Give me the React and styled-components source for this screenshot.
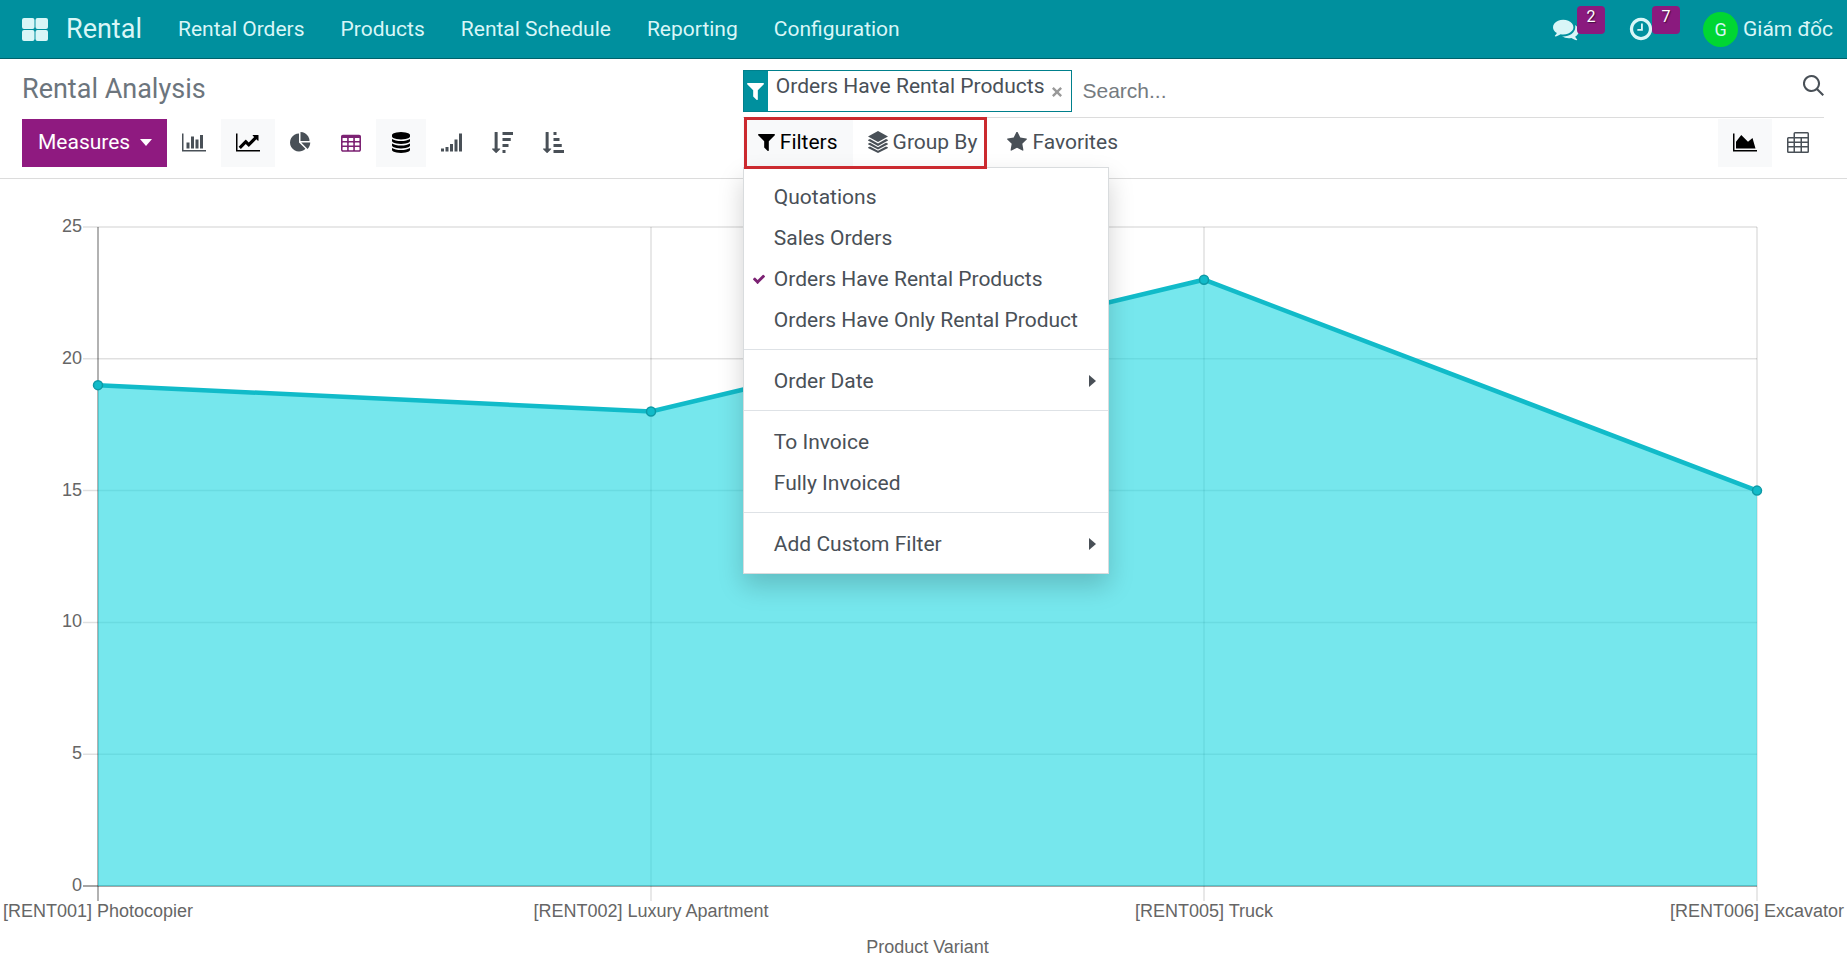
import { useLayoutEffect, useRef, useState } from "react";
import styled, { createGlobalStyle } from "styled-components";

const GlobalStyle = createGlobalStyle`
  *, *::before, *::after {
    box-sizing: border-box;
  }
  body {
    margin: 0;
    background-color: #fff;
    color: #495057;
    font-family: Roboto, "Liberation Sans", sans-serif;
    font-size: 21px;
  }
  button, input {
    font: inherit;
    color: inherit;
  }
`;

//*********************************************************
//  Icons

const icons = {
  apps: {
    box: "0 0 26 23",
    path: "M2 0h8.500q2 0 2 2v7q0 2-2 2h-8.500q-2 0-2-2v-7q0-2 2-2zM15.500 0h8.500q2 0 2 2v7q0 2-2 2h-8.500q-2 0-2-2v-7q0-2 2-2zM2 12h8.500q2 0 2 2v7q0 2-2 2h-8.500q-2 0-2-2v-7q0-2 2-2zM15.500 12h8.500q2 0 2 2v7q0 2-2 2h-8.500q-2 0-2-2v-7q0-2 2-2z",
  },
  comments: {
    path: "M1408 768q0 139-94 257t-256.500 186.500-353.500 68.500q-86 0-176-16-124 88-278 128-36 9-86 16h-3q-11 0-20.500-8t-11.500-21q-1-3-1-6.500t.5-6.500 2-6l2.500-5 3.500-5.500 4-5 4.500-5 4-4.500q5-6 23-25t26-29.500 22.500-29 25-38.500 20.500-44q-124-72-195-177t-71-224q0-139 94-257t256.500-186.500 353.500-68.500 353.500 68.500 256.500 186.500 94 257zm384 256q0 120-71 224.500t-195 176.500q10 24 20.500 44t25 38.500 22.500 29 26 29.500 23 25q1 1 4 4.500t4.500 5 4 5 3.500 5.500l2.500 5 2 6 .5 6.500-1 6.500q-3 14-13 22t-22 7q-50-7-86-16-154-40-278-128-90 16-176 16-271 0-472-132 58 4 88 4 161 0 309-45t264-129q125-92 192-212t67-254q0-77-23-152 129 71 204 178t75 230z",
  },
  clock: {
    path: "M1024 544v448q0 14-9 23t-23 9h-320q-14 0-23-9t-9-23v-64q0-14 9-23t23-9h224v-352q0-14 9-23t23-9h64q14 0 23 9t9 23zm416 352q0-148-73-273t-198-198-273-73-273 73-198 198-73 273 73 273 198 198 273 73 273-73 198-198 73-273zm224 0q0 209-103 385.500t-279.500 279.500-385.500 103-385.500-103-279.500-279.500-103-385.500 103-385.500 279.500-279.500 385.500-103 385.500 103 279.500 279.500 103 385.500z",
  },
  bar: {
    box: "0 0 2048 1792",
    path: "M640 896v512h-256v-512h256zm384-512v1024h-256v-1024h256zm1024 1152v128h-2048v-1536h128v1408h1920zm-640-896v768h-256v-768h256zm384-384v1152h-256v-1152h256z",
  },
  line: {
    box: "0 0 2048 1792",
    path: "M2048 1536v128h-2048v-1536h128v1408h1920zm-128-1248v435q0 21-19.500 29.500t-35.500-7.500l-121-121-633 633q-10 10-23 10t-23-10l-233-233-416 416-192-192 585-585q10-10 23-10t23 10l233 233 464-464-121-121q-16-16-7.500-35.500t29.500-19.500h435q14 0 23 9t9 23z",
  },
  area: {
    box: "0 0 2048 1792",
    path: "M2048 1536v128h-2048v-1536h128v1408h1920zm-384-1024l256 896h-1664v-576l448-576 576 576z",
  },
  pie: {
    path: "M768 890l546 546q-106 108-247.500 168t-298.500 60q-209 0-385.500-103t-279.500-279.500-103-385.500 103-385.500 279.500-279.500 385.500-103v762zm187 6h773q0 157-60 298.500t-168 247.500zm709-128h-768v-768q209 0 385.500 103t279.500 279.500 103 385.500z",
  },
  table: {
    box: "0 128 1664 1536",
    path: "M160 256h1344q66 0 113 47t47 113v1088q0 66-47 113t-113 47h-1344q-66 0-113-47t-47-113v-1088q0-66 47-113t113-47zM128 544v192q0 32 32 32h320q32 0 32-32v-192q0-32-32-32h-320q-32 0-32 32zM640 544v192q0 32 32 32h320q32 0 32-32v-192q0-32-32-32h-320q-32 0-32 32zM1152 544v192q0 32 32 32h320q32 0 32-32v-192q0-32-32-32h-320q-32 0-32 32zM128 928v192q0 32 32 32h320q32 0 32-32v-192q0-32-32-32h-320q-32 0-32 32zM640 928v192q0 32 32 32h320q32 0 32-32v-192q0-32-32-32h-320q-32 0-32 32zM1152 928v192q0 32 32 32h320q32 0 32-32v-192q0-32-32-32h-320q-32 0-32 32zM128 1312v192q0 32 32 32h320q32 0 32-32v-192q0-32-32-32h-320q-32 0-32 32zM640 1312v192q0 32 32 32h320q32 0 32-32v-192q0-32-32-32h-320q-32 0-32 32zM1152 1312v192q0 32 32 32h320q32 0 32-32v-192q0-32-32-32h-320q-32 0-32 32z",
  },
  database: {
    box: "0 0 1536 1792",
    path: "M768 768q237 0 443-43t325-127v170q0 69-103 128t-280 93.500-385 34.500-385-34.500-280-93.500-103-128v-170q119 84 325 127t443 43zm0 768q237 0 443-43t325-127v170q0 69-103 128t-280 93.500-385 34.500-385-34.500-280-93.500-103-128v-170q119 84 325 127t443 43zm0-384q237 0 443-43t325-127v170q0 69-103 128t-280 93.500-385 34.500-385-34.500-280-93.500-103-128v-170q119 84 325 127t443 43zm0-1152q208 0 385 34.500t280 93.500 103 128v128q0 69-103 128t-280 93.500-385 34.500-385-34.500-280-93.500-103-128v-128q0-69 103-128t280-93.500 385-34.500z",
  },
  signal: {
    path: "M0 1408h256v256h-256zM384 1280h256v384h-256zM768 1024h256v640h-256zM1152 640h256v1024h-256zM1536 128h256v1536h-256z",
  },
  sortDesc: {
    path: "M704 1440q0 12-10 24l-319 319q-10 9-23 9-12 0-23-9l-320-320q-15-16-7-35 8-20 30-20h192v-1376q0-14 9-23t23-9h192q14 0 23 9t9 23v1376h192q14 0 23 9t9 23zM896 0h896v256h-896zM896 512h704v256h-704zM896 1024h512v256h-512zM896 1536h256v256h-256z",
  },
  sortAsc: {
    path: "M704 1440q0 12-10 24l-319 319q-10 9-23 9-12 0-23-9l-320-320q-15-16-7-35 8-20 30-20h192v-1376q0-14 9-23t23-9h192q14 0 23 9t9 23v1376h192q14 0 23 9t9 23zM896 0h256v256h-256zM896 512h512v256h-512zM896 1024h704v256h-704zM896 1536h896v256h-896z",
  },
  filter: {
    box: "192 256 1408 1408",
    path: "M1595 295q17 41-14 70l-493 493v742q0 42-39 59-13 5-25 5-27 0-45-19l-256-256q-19-19-19-45v-486l-493-493q-31-29-14-70 17-39 59-39h1280q42 0 59 39z",
  },
  layers: {
    box: "0 0 20 22",
    path: "M10 0l10 5.500-10 5.500-10-5.500zM0 9l2-1 8 4.400 8-4.400 2 1v.6l-10 5.300-10-5.300zM0 12.800l2-1 8 4.400 8-4.400 2 1v.5l-10 5.300-10-5.300zM0 16.600l2-1 8 4.200 8-4.200 2 1v.3l-10 5.100-10-5.100z",
  },
  star: {
    box: "64 64 1664 1664",
    path: "M1728 647q0 22-26 48l-363 354 86 500q1 7 1 20 0 21-10.500 35.500t-30.500 14.500q-19 0-40-12l-449-236-449 236q-22 12-40 12-21 0-31.500-14.500t-10.500-35.500q0-6 2-20l86-500-364-354q-25-27-25-48 0-37 56-46l502-73 225-455q19-41 49-41t49 41l225 455 502 73q56 9 56 46z",
  },
  check: {
    box: "121 258 1550 1264",
    path: "M1671 566q0 40-28 68l-724 724-136 136q-28 28-68 28t-68-28l-136-136-362-362q-28-28-28-68t28-68l136-136q28-28 68-28t68 28l294 295 656-657q28-28 68-28t68 28l136 136q28 28 28 68z",
  },
  close: {
    box: "0 0 10 10",
    path: "M1.700 0l3.300 3.300 3.300-3.300 1.700 1.700-3.300 3.300 3.300 3.300-1.700 1.700-3.300-3.300-3.300 3.300-1.700-1.700 3.300-3.300-3.300-3.300z",
  },
  search: {
    box: "0 0 21 21",
    path: "M8.500 0a8.500 8.500 0 0 1 6.700 13.700l5.800 5.800-1.500 1.500-5.800-5.800a8.500 8.500 0 1 1-5.200-15.200zM8.500 2a6.500 6.500 0 1 0 0 13 6.500 6.500 0 0 0 0-13z",
  },
  pivot: {
    box: "0 0 22 21",
    path: "M8 0h12.500q1.500 0 1.500 1.500v18q0 1.500-1.500 1.500h-19q-1.500 0-1.500-1.500v-13q0-1.500 1.500-1.500h5v-3.500q0-1.500 1.500-1.500zM8 1.500v3.500h12.500v-3.500zM1.500 6.500v3h5v-3zM8 6.500v3h5.500v-3zM15 6.500v3h5.500v-3zM1.500 11v3h5v-3zM8 11v3h5.500v-3zM15 11v3h5.500v-3zM1.500 15.500v4h5v-4zM8 15.500v4h5.500v-4zM15 15.500v4h5.500v-4z",
  },
  caretDown: { box: "0 0 12 7", path: "M0 0h12l-6 7z" },
  caretRight: { box: "0 0 7 12", path: "M0 0l7 6-7 6z" },
};

const Svg = styled.svg`
  display: block;
  flex: none;
  fill: currentColor;
`;

const Icon = ({ name, width = 21, height = 21 }) => (
  <Svg
    width={width}
    height={height}
    viewBox={icons[name].box || "0 0 1792 1792"}
    aria-hidden="true"
  >
    <path fillRule="evenodd" d={icons[name].path} />
  </Svg>
);

//*********************************************************
//  Navbar

const Nav = styled.nav`
  display: flex;
  align-items: center;
  height: 59px;
  padding: 0 14px 0 22px;
  background-color: #00909e;
  border-bottom: 1px solid #00626b;
  color: #d9f6f7;
`;

const NavButton = styled.button`
  display: flex;
  padding: 0;
  border: none;
  background: none;
  cursor: pointer;
`;

const Brand = styled.a`
  margin: 0 36px 0 18px;
  color: inherit;
  font-size: 27px;
  text-decoration: none;
`;

const NavLinks = styled.div`
  display: flex;
  flex: 1;
  gap: 36px;
`;

const NavLink = styled.a`
  color: inherit;
  text-decoration: none;
  white-space: nowrap;
`;

const Systray = styled.div`
  display: flex;
  align-items: center;
`;

const TrayButton = styled(NavButton)`
  position: relative;
  margin-right: 49px;
`;

const Badge = styled.span`
  position: absolute;
  left: 24px;
  bottom: 8px;
  width: 28px;
  height: 28px;
  border-radius: 4px;
  background-color: #8a1a7e;
  color: #fff;
  font-size: 16px;
  line-height: 22px;
  text-align: center;
  text-shadow: 1px 1px 1px rgba(0, 0, 0, 0.5);
`;

const User = styled(NavButton)`
  align-items: center;
  gap: 5px;
`;

const Avatar = styled.span`
  width: 35px;
  height: 35px;
  border-radius: 50%;
  background-color: #00d633;
  font-size: 18px;
  line-height: 36px;
  text-align: center;
`;

//*********************************************************
//  Control panel

const ControlPanel = styled.header`
  display: grid;
  grid-template-columns: 2fr 3fr;
  grid-template-rows: 59px 60px;
  padding: 0 23px 0 22px;
  border-bottom: 1px solid #dcdcdc;
`;

const Title = styled.h1`
  margin: 0;
  color: #6c757d;
  font-size: 27px;
  font-weight: 400;
  line-height: 60px;
`;

const SearchBar = styled.div`
  display: flex;
  align-items: center;
  padding-top: 6px;
  border-bottom: 1px solid #dcdcdc;
`;

const Facet = styled.div`
  display: flex;
  height: 42px;
  border: 1px solid #00808c;
`;

const FacetIcon = styled.span`
  display: flex;
  align-items: center;
  justify-content: center;
  width: 24px;
  background-color: #00909e;
  color: #fff;
`;

const FacetLabel = styled.span`
  padding-left: 8px;
  line-height: 31px;
  white-space: nowrap;
`;

const FacetRemove = styled.button`
  display: flex;
  align-items: center;
  padding: 1px 9px 0 8px;
  border: none;
  background: none;
  color: #999;
  cursor: pointer;
`;

const SearchInput = styled.input`
  flex: 1;
  min-width: 0;
  padding: 0 10px;
  border: none;
  outline: none;
  font-family: "Liberation Sans", Arial, sans-serif;

  &::placeholder {
    color: #757b80;
    opacity: 1;
  }
`;

const SearchButton = styled.button`
  display: flex;
  padding: 0 0 12px;
  border: none;
  background: none;
  cursor: pointer;
`;

const Tools = styled.div`
  display: flex;
  align-items: flex-start;
  padding-top: 1px;
`;

const Measures = styled.button`
  display: flex;
  align-items: center;
  gap: 10px;
  height: 48px;
  padding: 0 15px 2px 16px;
  border: none;
  background-color: #8f1a80;
  color: #fff;
  cursor: pointer;
`;

const ToolButton = styled.button`
  display: flex;
  align-items: center;
  gap: 5px;
  height: 48px;
  padding: 0 15px 2px;
  border: none;
  background-color: ${(props) => (props.$active ? "#f8f9fa" : "transparent")};
  color: ${(props) => (props.$accent ? "#7c2273" : props.$active ? "#000" : "#495057")};
  white-space: nowrap;
  cursor: pointer;
`;

const Spacer = styled.div`
  flex: 1;
`;

const Highlight = styled.div`
  position: relative;
  display: flex;

  &::after {
    content: "";
    position: absolute;
    z-index: 3;
    inset: -2px 5px -2px 1px;
    border: 3px solid #cb2a2f;
    pointer-events: none;
  }
`;

//*********************************************************
//  Filter menu

const Menu = styled.div`
  position: absolute;
  z-index: 2;
  top: 48px;
  left: 0;
  width: 366px;
  padding: 8px 0 9px;
  border: 1px solid #d9dcde;
  background-color: #fff;
  box-shadow: 0 12px 24px rgba(0, 0, 0, 0.18);
`;

const MenuItem = styled.button`
  display: flex;
  align-items: center;
  width: 100%;
  height: 41px;
  padding: 0 12px 0 9px;
  border: none;
  background: none;
  text-align: left;
  white-space: nowrap;
  cursor: pointer;
`;

const CheckSlot = styled.span`
  width: 21px;
  color: #7c2273;
`;

const MenuLabel = styled.span`
  flex: 1;
`;

const Divider = styled.hr`
  height: 1px;
  margin: 9px 0 10px;
  border: none;
  background-color: #dee2e6;
`;

//*********************************************************
//  Chart

const Page = styled.div`
  display: flex;
  flex-direction: column;
  min-height: 100vh;
`;

const ChartArea = styled.main`
  flex: 1;
  min-height: 400px;
  overflow: hidden;

  svg {
    display: block;
  }
  text {
    fill: #666;
    font-family: "Liberation Sans", Arial, sans-serif;
    font-size: 18px;
  }
`;

const products = [
  { name: "[RENT001] Photocopier", value: 19 },
  { name: "[RENT002] Luxury Apartment", value: 18 },
  { name: "[RENT005] Truck", value: 23 },
  { name: "[RENT006] Excavator", value: 15 },
];
const ticks = [0, 5, 10, 15, 20, 25];
const margin = { top: 48, right: 90, bottom: 77, left: 98 };

const Chart = () => {
  const ref = useRef(null);
  const [size, setSize] = useState({ width: 0, height: 0 });

  useLayoutEffect(() => {
    const measure = () => {
      const { width, height } = ref.current.getBoundingClientRect();
      setSize({ width: Math.floor(width), height: Math.floor(height) });
    };
    measure();
    window.addEventListener("resize", measure);
    return () => window.removeEventListener("resize", measure);
  }, []);

  const { width, height } = size;
  const right = width - margin.right;
  const bottom = height - margin.bottom;
  const x = (i) => margin.left + (i * (right - margin.left)) / (products.length - 1);
  const y = (v) => bottom - (v * (bottom - margin.top)) / 25;
  const points = products.map((p, i) => `${x(i)},${y(p.value)}`).join(" ");

  return (
    <ChartArea ref={ref}>
      {width > 0 && (
        <svg width={width} height={height - 1} role="img" aria-label="Rental Analysis">
          {ticks.map((t) => (
            <g key={t}>
              <line
                x1={margin.left - 15}
                x2={right}
                y1={y(t)}
                y2={y(t)}
                stroke="#000"
                strokeOpacity={t === 0 ? 0.35 : 0.12}
                strokeWidth={t === 0 ? 2 : 1.5}
              />
              <text x={margin.left - 16} y={y(t) + 5} textAnchor="end">
                {t}
              </text>
            </g>
          ))}
          {products.map((p, i) => (
            <g key={p.name}>
              <line
                x1={x(i)}
                x2={x(i)}
                y1={margin.top}
                y2={bottom + 15}
                stroke="#000"
                strokeOpacity={i === 0 ? 0.3 : 0.12}
                strokeWidth={i === 0 ? 2 : 1.5}
              />
              <text x={x(i)} y={bottom + 31} textAnchor="middle">
                {p.name}
              </text>
            </g>
          ))}
          <polygon
            points={`${x(0)},${bottom} ${points} ${right},${bottom}`}
            fill="rgba(27, 215, 225, 0.6)"
          />
          <polyline points={points} fill="none" stroke="#11bbc9" strokeWidth="4.5" />
          {products.map((p, i) => (
            <circle
              key={p.name}
              cx={x(i)}
              cy={y(p.value)}
              r="4.500"
              fill="#11bbc9"
              stroke="#0d9aa6"
              strokeWidth="1.500"
            />
          ))}
          <text x={(margin.left + right) / 2} y={bottom + 67} textAnchor="middle">
            Product Variant
          </text>
        </svg>
      )}
    </ChartArea>
  );
};

const FilterItem = ({ label, checked, submenu }) => (
  <MenuItem>
    <CheckSlot>{checked && <Icon name="check" width={12} height={10} />}</CheckSlot>
    <MenuLabel>{label}</MenuLabel>
    {submenu && <Icon name="caretRight" width={7} height={12} />}
  </MenuItem>
);

const App = () => {
  return (
    <Page>
      <GlobalStyle />
      <Nav>
        <NavButton aria-label="Apps">
          <Icon name="apps" width={26} height={23} />
        </NavButton>
        <Brand href="#rental">Rental</Brand>
        <NavLinks>
          <NavLink href="#orders">Rental Orders</NavLink>
          <NavLink href="#products">Products</NavLink>
          <NavLink href="#schedule">Rental Schedule</NavLink>
          <NavLink href="#reporting">Reporting</NavLink>
          <NavLink href="#configuration">Configuration</NavLink>
        </NavLinks>
        <Systray>
          <TrayButton aria-label="Messages">
            <Icon name="comments" width={26} height={26} />
            <Badge>2</Badge>
          </TrayButton>
          <TrayButton aria-label="Activities">
            <Icon name="clock" width={26} height={26} />
            <Badge>7</Badge>
          </TrayButton>
          <User>
            <Avatar>G</Avatar>
            Giám đốc
          </User>
        </Systray>
      </Nav>

      <ControlPanel>
        <Title>Rental Analysis</Title>
        <SearchBar>
          <Facet>
            <FacetIcon>
              <Icon name="filter" width={17} height={17} />
            </FacetIcon>
            <FacetLabel>Orders Have Rental Products</FacetLabel>
            <FacetRemove aria-label="Remove">
              <Icon name="close" width={10} height={10} />
            </FacetRemove>
          </Facet>
          <SearchInput type="text" placeholder="Search..." aria-label="Search" />
          <SearchButton aria-label="Search">
            <Icon name="search" />
          </SearchButton>
        </SearchBar>

        <Tools>
          <Measures>
            Measures
            <Icon name="caretDown" width={12} height={7} />
          </Measures>
          <ToolButton aria-label="Bar Chart">
            <Icon name="bar" width={24} />
          </ToolButton>
          <ToolButton $active aria-label="Line Chart">
            <Icon name="line" width={24} />
          </ToolButton>
          <ToolButton aria-label="Pie Chart">
            <Icon name="pie" />
          </ToolButton>
          <ToolButton $accent aria-label="Table">
            <Icon name="table" width={20} />
          </ToolButton>
          <ToolButton $active aria-label="Stacked">
            <Icon name="database" width={20} />
          </ToolButton>
          <ToolButton aria-label="Cumulative">
            <Icon name="signal" />
          </ToolButton>
          <ToolButton aria-label="Descending">
            <Icon name="sortDesc" />
          </ToolButton>
          <ToolButton aria-label="Ascending">
            <Icon name="sortAsc" />
          </ToolButton>
        </Tools>

        <Tools>
          <Highlight>
            <ToolButton $active aria-expanded="true">
              <Icon name="filter" width={17} height={17} />
              Filters
            </ToolButton>
            <ToolButton>
              <Icon name="layers" width={20} height={22} />
              Group By
            </ToolButton>
            <Menu>
              <FilterItem label="Quotations" />
              <FilterItem label="Sales Orders" />
              <FilterItem label="Orders Have Rental Products" checked />
              <FilterItem label="Orders Have Only Rental Product" />
              <Divider />
              <FilterItem label="Order Date" submenu />
              <Divider />
              <FilterItem label="To Invoice" />
              <FilterItem label="Fully Invoiced" />
              <Divider />
              <FilterItem label="Add Custom Filter" submenu />
            </Menu>
          </Highlight>
          <ToolButton>
            <Icon name="star" width={20} height={20} />
            Favorites
          </ToolButton>
          <Spacer />
          <ToolButton $active aria-label="Graph">
            <Icon name="area" width={24} />
          </ToolButton>
          <ToolButton aria-label="Pivot">
            <Icon name="pivot" width={22} />
          </ToolButton>
        </Tools>
      </ControlPanel>

      <Chart />
    </Page>
  );
};

export default App;
